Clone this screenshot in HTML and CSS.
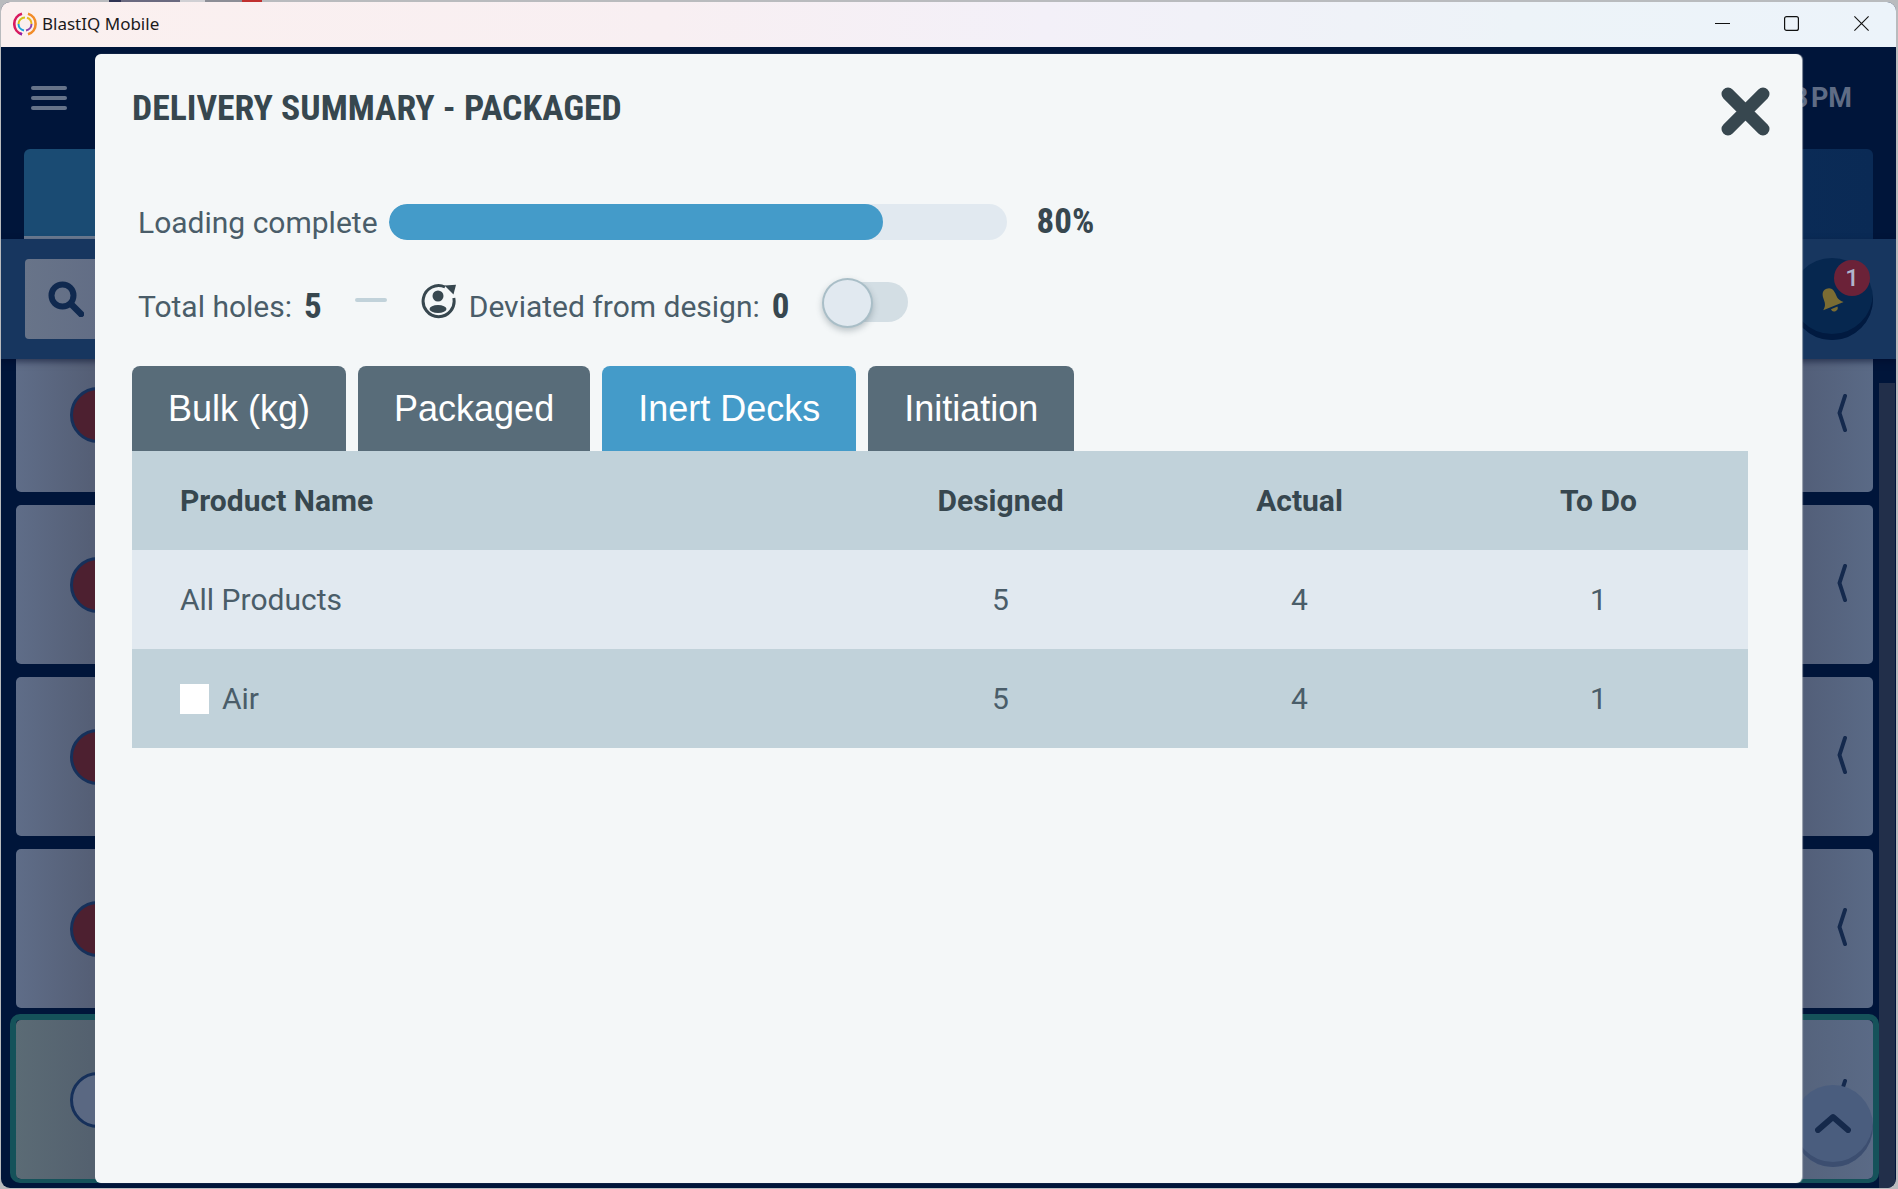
FILE: index.html
```html
<!DOCTYPE html>
<html lang="en">
<head>
<meta charset="utf-8">
<title>BlastIQ Mobile</title>
<link rel="stylesheet" href="styles.css">
</head>
<body>
<div class="desktop-strip">
  <span class="seg seg-a"></span><span class="seg seg-b"></span><span class="seg seg-c"></span><span class="seg seg-d"></span><span class="seg seg-e"></span>
</div>
<div class="window">
  <div class="titlebar">
    <svg class="logo" viewBox="0 0 24 24" aria-hidden="true">
      <g fill="none" stroke-width="2.6">
        <path d="M9 1.8A10.6 10.6 0 0 0 9 22.2" stroke="#d81b60"/>
        <path d="M9 22.2A10.6 10.6 0 0 1 7 21.3" stroke="#8e24aa"/>
        <path d="M15 1.8A10.6 10.6 0 0 1 22.6 12" stroke="#f28c28"/>
        <path d="M22.6 12A10.6 10.6 0 0 1 15 22.2" stroke="#f28c28"/>
        <path d="M12 5.5A6.5 6.5 0 0 0 5.5 12" stroke="#d4c21a" stroke-width="2"/>
        <path d="M5.5 12A6.5 6.5 0 0 0 11 18.4" stroke="#1ba3dc" stroke-width="2"/>
        <path d="M13 18.4A6.5 6.5 0 0 0 18.5 12" stroke="#8e44ad" stroke-width="2"/>
        <path d="M18.5 12A6.5 6.5 0 0 0 14 5.8" stroke="#e8b923" stroke-width="2"/>
      </g>
    </svg>
    <span class="app-name">BlastIQ Mobile</span>
    <div class="win-controls">
      <svg class="win-btn" viewBox="0 0 15 15" aria-hidden="true"><path d="M0 7.5H15" stroke="#111" stroke-width="1"/></svg>
      <svg class="win-btn" viewBox="0 0 15 15" aria-hidden="true"><rect x=".6" y=".6" width="13.8" height="13.8" rx="2" fill="none" stroke="#111" stroke-width="1.2"/></svg>
      <svg class="win-btn win-close" viewBox="0 0 15 15" aria-hidden="true"><path d="M.4.4L14.6 14.6M14.6.4L.4 14.6" stroke="#111" stroke-width="1.1"/></svg>
    </div>
  </div>

  <div class="app">
    <header class="app-header">
      <div class="hamburger"><i></i><i></i><i></i></div>
      <span class="clock">1:58 PM</span>
    </header>
    <div class="app-tabs">
      <div class="app-tab app-tab-on"></div>
      <div class="app-tab"></div>
    </div>
    <div class="search-band">
      <div class="search-box">
        <svg class="search-icon" viewBox="0 0 36 36" aria-hidden="true"><circle cx="14.500" cy="14.500" r="11" fill="none" stroke="#10294f" stroke-width="6"/><path d="M23 23L33 33" stroke="#10294f" stroke-width="6.500" stroke-linecap="round"/></svg>
      </div>
      <div class="bell">
        <svg class="bell-icon" viewBox="0 0 26 26" aria-hidden="true"><g transform="rotate(-22 13 13)"><path d="M13 1C8 1 6.500 5 6.500 10C6.500 15 5 17 2 19.500H24C21 17 19.500 15 19.500 10C19.500 5 18 1 13 1Z" fill="#7b6c33"/><path d="M9.500 21.500A3.500 3.500 0 0 0 16.500 21.500Z" fill="#7b6c33"/></g></svg>
        <span class="badge">1</span>
      </div>
    </div>
    <div class="content">
      <div class="list">
        <div class="card card-first"><span class="dot"></span><svg class="chev" viewBox="0 0 10 38" aria-hidden="true"><path d="M8 2L2.500 19L8 36" fill="none" stroke="#14294d" stroke-width="4" stroke-linecap="round" stroke-linejoin="round"/></svg></div>
        <div class="card"><span class="dot"></span><svg class="chev" viewBox="0 0 10 38" aria-hidden="true"><path d="M8 2L2.500 19L8 36" fill="none" stroke="#14294d" stroke-width="4" stroke-linecap="round" stroke-linejoin="round"/></svg></div>
        <div class="card"><span class="dot"></span><svg class="chev" viewBox="0 0 10 38" aria-hidden="true"><path d="M8 2L2.500 19L8 36" fill="none" stroke="#14294d" stroke-width="4" stroke-linecap="round" stroke-linejoin="round"/></svg></div>
        <div class="card"><span class="dot"></span><svg class="chev" viewBox="0 0 10 38" aria-hidden="true"><path d="M8 2L2.500 19L8 36" fill="none" stroke="#14294d" stroke-width="4" stroke-linecap="round" stroke-linejoin="round"/></svg></div>
        <div class="card-active">
          <div class="card card-inner"><span class="dot dot-idle"></span><svg class="chev" viewBox="0 0 10 38" aria-hidden="true"><path d="M8 2L2.500 19L8 36" fill="none" stroke="#14294d" stroke-width="4" stroke-linecap="round" stroke-linejoin="round"/></svg></div>
          <button class="scroll-up" type="button" aria-label="Scroll up"><svg viewBox="0 0 36 20" aria-hidden="true"><path d="M3 17L18 4L33 17" fill="none" stroke="#15294b" stroke-width="6" stroke-linecap="round" stroke-linejoin="round"/></svg></button>
        </div>
      </div>
      <div class="scrollbar"></div>
    </div>
  </div>

  <section class="modal">
    <h1 class="modal-title">DELIVERY SUMMARY - PACKAGED</h1>
    <svg class="modal-close" viewBox="0 0 49 49" aria-hidden="true"><path d="M7 7L42 42M42 7L7 42" stroke="#37474f" stroke-width="13" stroke-linecap="round"/></svg>

    <div class="progress-row">
      <span class="label">Loading complete</span>
      <div class="bar"><div class="bar-fill" style="width:80%"></div></div>
      <span class="num pct">80%</span>
    </div>

    <div class="stats-row">
      <span class="label">Total holes:</span>
      <span class="num stat-num">5</span>
      <span class="dash"></span>
      <svg class="dev-icon" viewBox="0 0 38 36" aria-hidden="true">
        <path d="M25 4A15.500 15.500 0 1 0 33.800 15" fill="none" stroke="#37474f" stroke-width="3"/>
        <path d="M24.500 2.500L36 1.800L33.500 11.500Z" fill="#37474f"/>
        <circle cx="18" cy="13" r="5.500" fill="#37474f"/>
        <ellipse cx="18" cy="26" rx="8.500" ry="4" fill="#37474f"/>
      </svg>
      <span class="label dev-label">Deviated from design:</span>
      <span class="num stat-num">0</span>
      <div class="toggle"><span class="knob"></span></div>
    </div>

    <nav class="tabs">
      <button class="tab" type="button">Bulk (kg)</button>
      <button class="tab" type="button">Packaged</button>
      <button class="tab tab-on" type="button">Inert Decks</button>
      <button class="tab" type="button">Initiation</button>
    </nav>

    <div class="table">
      <div class="tr tr-dark th">
        <span class="td-name">Product Name</span><span>Designed</span><span>Actual</span><span>To Do</span>
      </div>
      <div class="tr tr-light">
        <span class="td-name">All Products</span><span>5</span><span>4</span><span>1</span>
      </div>
      <div class="tr tr-dark">
        <span class="td-name td-swatch"><i class="swatch"></i>Air</span><span>5</span><span>4</span><span>1</span>
      </div>
    </div>
  </section>
</div>
</body>
</html>
```
FILE: styles.css
```css
* { box-sizing: border-box; }
html, body { margin: 0; height: 100%; }
body {
  width: 1898px;
  height: 1189px;
  overflow: hidden;
  background: #b9bbbe;
  font-family: Roboto, "Noto Sans", sans-serif;
  position: relative;
}
.desktop-strip {
  height: 2px;
  display: flex;
  padding-left: 109px;
}
.seg { display: block; height: 2px; }
.seg-a { width: 12px; background: #2f3353; }
.seg-b { width: 59px; background: #6a6a80; }
.seg-c { width: 25px; background: #d0d0d4; }
.seg-d { width: 37px; background: #8c8e96; }
.seg-e { width: 20px; background: #c0302f; }

.window {
  position: relative;
  margin: 0 1px 0 1px;
  width: 1895px;
  height: 1186px;
  border-radius: 9px;
  overflow: hidden;
  display: flex;
  flex-direction: column;
  background: #00153a;
}
.titlebar {
  height: 45px;
  flex: none;
  display: flex;
  align-items: center;
  padding: 0 0 2px 12px;
  background: linear-gradient(90deg, #fbf0ef 0%, #f8eff2 35%, #f3f0f8 55%, #edf3f8 80%, #ecf3fa 100%);
}
.logo { width: 24px; height: 24px; flex: none; }
.app-name {
  margin-left: 5px;
  font: 17px/24px "Noto Sans", sans-serif;
  color: #1a1a1a;
}
.win-controls { margin-left: auto; display: flex; padding-right: 27px; }
.win-btn { width: 15px; height: 15px; margin-left: 54px; display: block; }
.win-btn:first-child { margin-left: 0; }
.win-close { margin-left: 55px; }

.app { flex: 1; display: flex; flex-direction: column; min-height: 0; }
.app-header {
  height: 102px;
  flex: none;
  display: flex;
  align-items: center;
  justify-content: space-between;
  padding: 0 44px 0 30px;
}
.hamburger { display: flex; flex-direction: column; gap: 6px; width: 36px; }
.hamburger i { display: block; height: 4px; border-radius: 2px; background: #667389; }
.clock { font-size: 27px; font-weight: 700; color: #5f6c85; word-spacing: -4px; }

.app-tabs {
  height: 90px;
  flex: none;
  display: flex;
  padding: 0 23px;
}
.app-tab { flex: 1; background: linear-gradient(90deg, #0f3763, #0a2a55); border-radius: 0 6px 0 0; }
.app-tab-on {
  background: #1a4b73;
  border-radius: 6px 0 0 0;
  border-bottom: 3px solid #6b7a90;
}

.search-band {
  height: 120px;
  flex: none;
  position: relative;
  z-index: 1;
  display: flex;
  align-items: center;
  padding: 0 23px 0 24px;
  background: #17365f;
  box-shadow: 0 3px 6px rgba(0, 10, 40, .5);
}
.search-box {
  flex: 1;
  height: 80px;
  padding-left: 23px;
  display: flex;
  align-items: center;
  border-radius: 4px;
  background: linear-gradient(90deg, #687489, #5a6480 10%);
}
.search-icon { width: 36px; height: 36px; }
.bell {
  position: relative;
  flex: none;
  width: 82px;
  height: 82px;
  margin-left: 20px;
  border-radius: 50%;
  background: #06274f;
  box-shadow: inset 0 -6px 0 #011a40;
}
.bell-icon { position: absolute; left: 27px; top: 29px; width: 26px; height: 26px; }
.badge {
  position: absolute;
  left: 43px;
  top: 2px;
  width: 36px;
  height: 36px;
  border-radius: 50%;
  background: #6b2238;
  color: #b0b5cc;
  font-size: 24px;
  font-weight: 500;
  line-height: 36px;
  text-align: center;
}

.content { flex: 1; display: flex; min-height: 0; }
.list {
  width: 1878px;
  flex: none;
  display: flex;
  flex-direction: column;
  gap: 13px;
  padding-left: 9px;
}
.scrollbar {
  width: 16px;
  flex: none;
  margin-top: 24px;
  background: #222f4a;
}
.card {
  flex: none;
  height: 159px;
  margin: 0 6px;
  padding: 0 26px 0 54px;
  display: flex;
  align-items: center;
  justify-content: space-between;
  border-radius: 5px;
  background: linear-gradient(90deg, #5f6d88 0%, #555f76 4%, #525e78 96%, #5a6a86 100%);
}
.card-first { margin-top: -22px; height: 155px; }
.dot {
  width: 56px;
  height: 56px;
  border-radius: 50%;
  background: #4d2030;
  border: 3px solid #16305a;
}
.dot-idle { background: #5a6882; }
.chev { width: 10px; height: 38px; flex: none; margin-bottom: 4px; }
.card-active {
  position: relative;
  height: 169px;
  margin-top: -7px;
  border-style: solid;
  border-width: 6px 6px 4px;
  border-color: #15525a;
  border-radius: 10px;
}
.card-inner {
  margin: 0;
  background: linear-gradient(90deg, #5b6b75 0%, #54616f 4%, #55637c 96%, #5a6a86 100%);
}
.scroll-up {
  position: absolute;
  right: 0;
  top: 65px;
  width: 80px;
  height: 82px;
  padding: 0;
  border: 0;
  border-radius: 50%;
  background: #4a5d7e;
  box-shadow: inset 0 -5px 0 #3c4e70;
  display: flex;
  align-items: center;
  justify-content: center;
}
.scroll-up svg { width: 36px; height: 20px; margin-bottom: 6px; }

.modal {
  position: absolute;
  z-index: 2;
  left: 94px;
  top: 52px;
  width: 1707px;
  height: 1129px;
  padding: 34px 0 0 37px;
  background: #f4f7f8;
  border-radius: 6px;
  box-shadow: 1px 0 1px rgba(200, 205, 210, .7);
}
.modal-title {
  margin: 0;
  font-size: 35.700px;
  line-height: 40px;
  font-weight: 700;
  font-stretch: 75%;
  color: #37474f;
}
.modal-close {
  position: absolute;
  left: 1626px;
  top: 33px;
  width: 49px;
  height: 49px;
}
.progress-row {
  margin-top: 76px;
  padding-left: 6px;
  height: 36px;
  display: flex;
  align-items: center;
}
.label { font-size: 30px; color: #4a5d69; white-space: nowrap; }
.num { font-weight: 700; font-size: 35px; font-stretch: 75%; color: #37474f; white-space: nowrap; }
.bar {
  width: 618px;
  height: 36px;
  margin-left: 11px;
  flex: none;
  border-radius: 18px;
  background: #e1e9f0;
  overflow: hidden;
}
.bar-fill { height: 100%; border-radius: 18px; background: #449bc9; }
.pct { margin-left: 30px; position: relative; top: -1px; }

.stats-row {
  margin-top: 38px;
  padding-left: 6px;
  height: 50px;
  display: flex;
  align-items: center;
}
.stats-row .label, .stat-num { position: relative; top: 3px; }
.stat-num { margin-left: 12px; }
.dash {
  width: 32px;
  height: 4px;
  margin: 0 33px 6px 33px;
  background: #c1d2da;
  border-radius: 2px;
}
.dev-icon { width: 38px; height: 36px; flex: none; margin-bottom: 4px; }
.dev-label { margin-left: 11px; }
.toggle {
  position: relative;
  width: 84px;
  height: 40px;
  margin-left: 34px;
  margin-bottom: 2px;
  border-radius: 20px;
  background: #d3dee4;
}
.knob {
  position: absolute;
  left: -2px;
  top: -4px;
  width: 51px;
  height: 50px;
  border-radius: 50%;
  background: #e1e9f0;
  border: 2px solid #a9bec7;
  box-shadow: 0 3px 6px rgba(60, 80, 90, .3);
}

.tabs { margin-top: 38px; display: flex; gap: 12px; height: 85px; }
.tab {
  padding: 0 36px;
  height: 85px;
  border: 0;
  border-radius: 8px 8px 0 0;
  background: #586c79;
  color: #fff;
  font: 36px "Liberation Sans", Arial, sans-serif;
}
.tab-on { background: #449bc9; }

.table { width: 1616px; }
.tr {
  display: grid;
  grid-template-columns: 1fr 299px 299px 299px;
  align-items: center;
  height: 99px;
  text-align: center;
  font-size: 30px;
  color: #4a5d69;
}
.tr-dark { background: #c1d2da; }
.tr-light { background: #e1e9f0; }
.th { font-weight: 700; color: #37474f; }
.td-name { text-align: left; padding-left: 48px; }
.td-swatch { display: flex; align-items: center; }
.swatch { width: 29px; height: 30px; margin-right: 13px; background: #fff; }
```
